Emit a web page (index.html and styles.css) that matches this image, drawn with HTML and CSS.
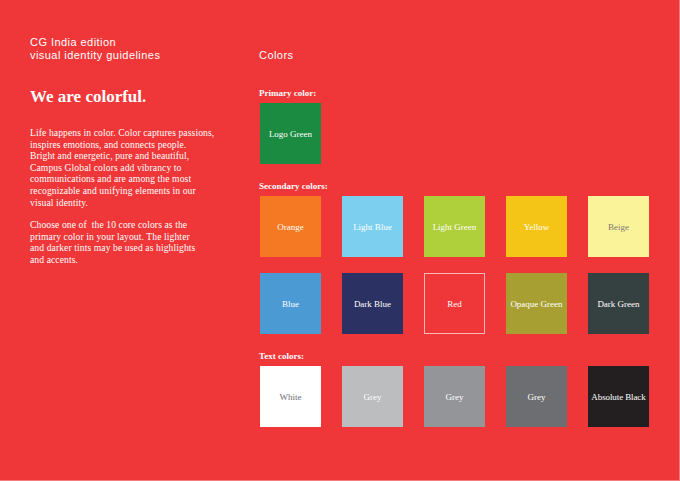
FILE: index.html
```html
<!DOCTYPE html>
<html lang="en">
<head>
<meta charset="utf-8">
<title>CG India edition – Colors</title>
<link rel="stylesheet" href="styles.css">
</head>
<body>
<div class="page">
  <aside class="intro">
    <p class="edition">CG India edition<br>visual identity guidelines</p>
    <h1 class="headline">We are colorful.</h1>
    <p class="copy">Life happens in color. Color captures passions,<br>inspires emotions, and connects people.<br>Bright and energetic, pure and beautiful,<br>Campus Global colors add vibrancy to<br>communications and are among the most<br>recognizable and unifying elements in our<br>visual identity.</p>
    <p class="copy">Choose one of &nbsp;the 10 core colors as the<br>primary color in your layout. The lighter<br>and darker tints may be used as highlights<br>and accents.</p>
  </aside>
  <main class="colors">
    <h2 class="section-title">Colors</h2>
    <section class="group group-primary">
      <h3 class="group-label">Primary color:</h3>
      <div class="swatches">
        <div class="swatch logo-green">Logo Green</div>
      </div>
    </section>
    <section class="group">
      <h3 class="group-label">Secondary colors:</h3>
      <div class="swatches">
        <div class="swatch orange">Orange</div>
        <div class="swatch light-blue">Light Blue</div>
        <div class="swatch light-green">Light Green</div>
        <div class="swatch yellow">Yellow</div>
        <div class="swatch beige">Beige</div>
        <div class="swatch blue">Blue</div>
        <div class="swatch dark-blue">Dark Blue</div>
        <div class="swatch red">Red</div>
        <div class="swatch opaque-green">Opaque Green</div>
        <div class="swatch dark-green">Dark Green</div>
      </div>
    </section>
    <section class="group">
      <h3 class="group-label">Text colors:</h3>
      <div class="swatches">
        <div class="swatch white">White</div>
        <div class="swatch grey-1">Grey</div>
        <div class="swatch grey-2">Grey</div>
        <div class="swatch grey-3">Grey</div>
        <div class="swatch black">Absolute Black</div>
      </div>
    </section>
  </main>
</div>
</body>
</html>
```

FILE: styles.css
```css
html, body {
  margin: 0;
  padding: 0;
}
body {
  background: #ef3638;
  color: #ffffff;
}
.page {
  width: 680px;
  height: 481px;
  box-sizing: border-box;
  border-right: 1px solid #f57c7d;
  border-bottom: 1px solid #f57c7d;
  display: flex;
  overflow: hidden;
}
.intro {
  width: 229px;
  box-sizing: border-box;
  padding: 36px 0 0 30px;
}
.edition {
  margin: 0;
  font-family: "Liberation Sans", Arial, sans-serif;
  font-size: 11px;
  line-height: 13px;
  letter-spacing: 0.45px;
}
.headline {
  margin: 25px 0 0;
  font-family: "Liberation Serif", "Times New Roman", serif;
  font-weight: bold;
  font-size: 17px;
  line-height: 20px;
}
.copy {
  margin: 20px 0 0;
  font-family: "Liberation Serif", "Times New Roman", serif;
  font-size: 9.6px;
  line-height: 11.6px;
  letter-spacing: 0.1px;
  white-space: nowrap;
}
.copy + .copy {
  margin-top: 11px;
}
.colors {
  padding: 49px 0 0 30px;
  flex: 1;
}
.section-title {
  margin: 0;
  font-family: "Liberation Sans", Arial, sans-serif;
  font-weight: normal;
  font-size: 11px;
  line-height: 13px;
  letter-spacing: 0.45px;
}
.group {
  margin-top: 17px;
}
.group-primary {
  margin-top: 26px;
}
.group-label {
  margin: 0 0 4px;
  font-family: "Liberation Serif", "Times New Roman", serif;
  font-weight: bold;
  font-size: 9px;
  line-height: 11px;
}
.swatches {
  display: grid;
  grid-template-columns: repeat(5, 61px);
  column-gap: 21px;
  row-gap: 16px;
  padding-left: 1px;
}
.swatch {
  width: 61px;
  height: 61px;
  box-sizing: border-box;
  display: flex;
  align-items: center;
  justify-content: center;
  text-align: center;
  white-space: nowrap;
  font-family: "Liberation Serif", "Times New Roman", serif;
  font-size: 9px;
  color: #ffffff;
}
.logo-green { background: #1b8b41; }
.orange { background: #f47922; }
.light-blue { background: #7ccfee; }
.light-green { background: #afcf3b; }
.yellow { background: #f4c517; }
.beige { background: #fbf39a; color: #7d7d72; }
.blue { background: #4b9ad4; }
.dark-blue { background: #2b3162; }
.red { background: #ef3638; border: 1px solid #f8b8b6; }
.opaque-green { background: #a89f33; }
.dark-green { background: #354141; }
.white { background: #ffffff; color: #6d6e71; }
.grey-1 { background: #bcbdbf; }
.grey-2 { background: #939598; }
.grey-3 { background: #6d6e71; }
.black { background: #231f20; letter-spacing: -0.1px; }
```
